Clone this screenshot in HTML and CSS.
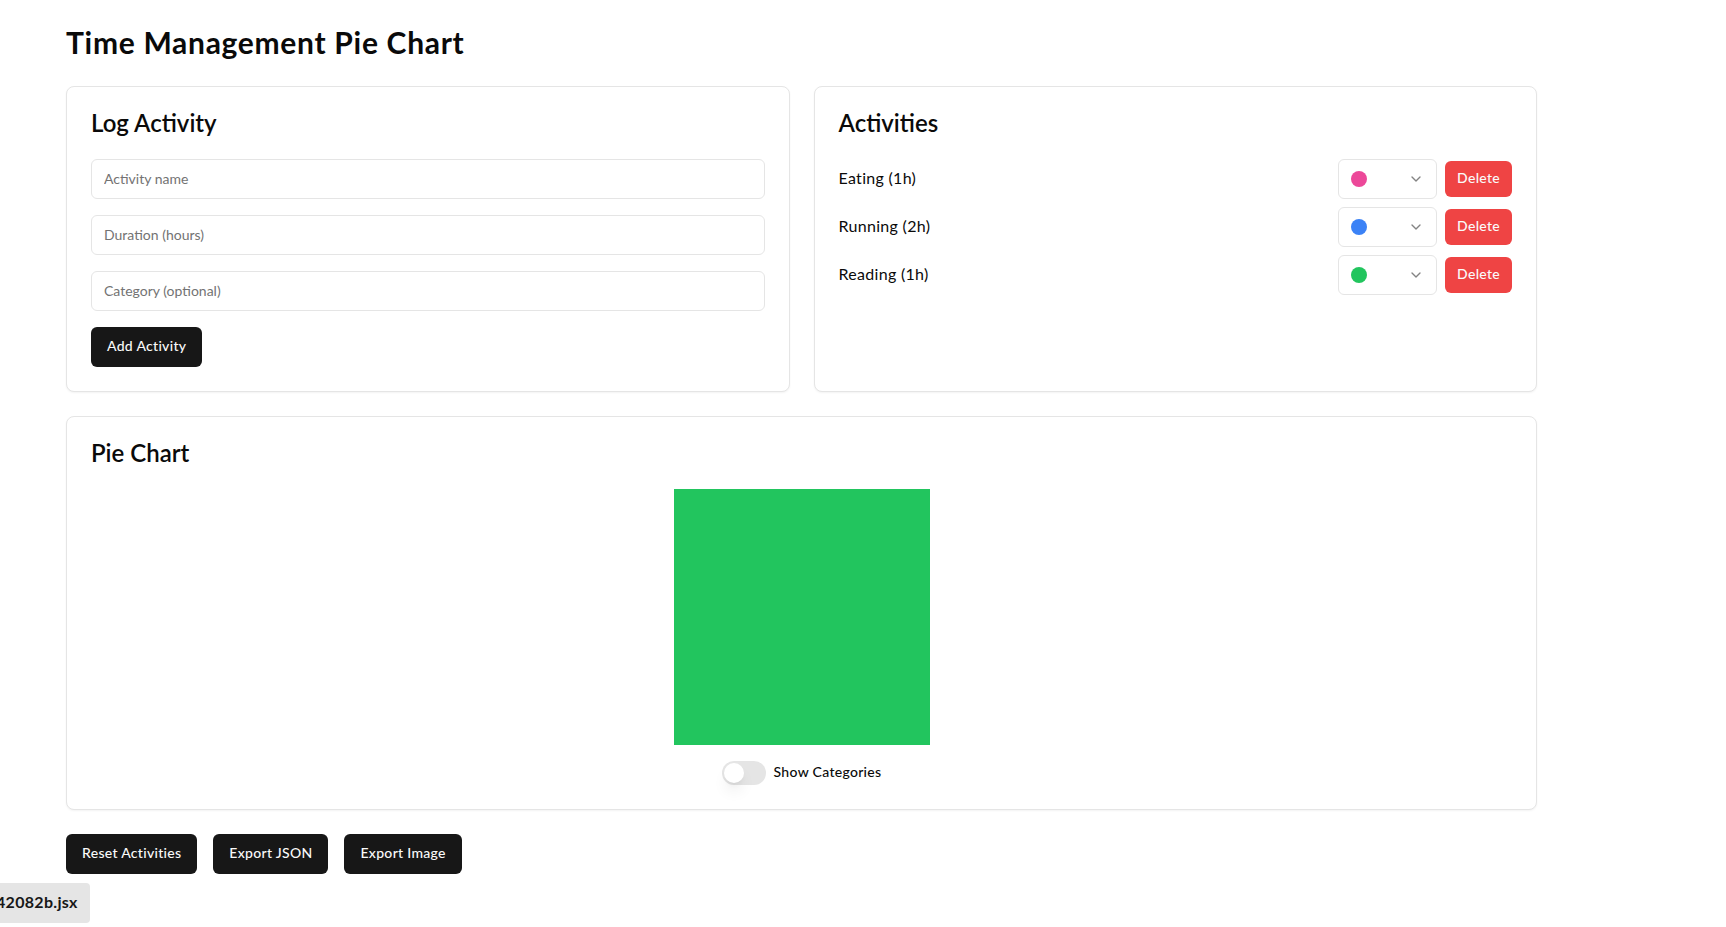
FILE: index.html
```html
<!DOCTYPE html>
<html lang="en">
<head>
<meta charset="utf-8">
<title>Time Management Pie Chart</title>
<link rel="stylesheet" href="styles.css">
</head>
<body>
<div class="page">
  <h1 class="title">Time Management Pie Chart</h1>
  <div class="top-grid">
    <section class="card">
      <h2 class="card-title">Log Activity</h2>
      <div class="form">
        <input class="input" type="text" placeholder="Activity name">
        <input class="input" type="text" placeholder="Duration (hours)">
        <input class="input" type="text" placeholder="Category (optional)">
        <div><button class="btn btn-dark">Add Activity</button></div>
      </div>
    </section>
    <section class="card">
      <h2 class="card-title">Activities</h2>
      <ul class="list">
        <li class="row">
          <span class="row-label">Eating (1h)</span>
          <div class="row-actions">
            <div class="select"><span class="dot dot-pink"></span><svg class="chev" viewBox="0 0 24 24" width="16" height="16"><path d="m6 9 6 6 6-6" fill="none" stroke="currentColor" stroke-width="2" stroke-linecap="round" stroke-linejoin="round"/></svg></div>
            <button class="btn btn-red">Delete</button>
          </div>
        </li>
        <li class="row">
          <span class="row-label">Running (2h)</span>
          <div class="row-actions">
            <div class="select"><span class="dot dot-blue"></span><svg class="chev" viewBox="0 0 24 24" width="16" height="16"><path d="m6 9 6 6 6-6" fill="none" stroke="currentColor" stroke-width="2" stroke-linecap="round" stroke-linejoin="round"/></svg></div>
            <button class="btn btn-red">Delete</button>
          </div>
        </li>
        <li class="row">
          <span class="row-label">Reading (1h)</span>
          <div class="row-actions">
            <div class="select"><span class="dot dot-green"></span><svg class="chev" viewBox="0 0 24 24" width="16" height="16"><path d="m6 9 6 6 6-6" fill="none" stroke="currentColor" stroke-width="2" stroke-linecap="round" stroke-linejoin="round"/></svg></div>
            <button class="btn btn-red">Delete</button>
          </div>
        </li>
      </ul>
    </section>
  </div>
  <section class="card chart-card">
    <h2 class="card-title">Pie Chart</h2>
    <div class="chart-body">
      <div class="chart"></div>
      <label class="toggle-row">
        <span class="switch"><span class="thumb"></span></span>
        <span class="toggle-label">Show Categories</span>
      </label>
    </div>
  </section>
  <div class="actions">
    <button class="btn btn-dark">Reset Activities</button>
    <button class="btn btn-dark">Export JSON</button>
    <button class="btn btn-dark">Export Image</button>
  </div>
</div>
<div class="file-tag"><span class="file-name">42082b.jsx</span></div>
</body>
</html>
```
FILE: styles.css
```css
* { box-sizing: border-box; }
html, body { margin: 0; padding: 0; background: #ffffff; }
body {
  font-family: "Lato", "Noto Sans", "Liberation Sans", sans-serif;
  color: #0a0a0a;
}
.page {
  width: 1537px;
  padding: 26px 0 0 66px;
}
.title {
  margin: 0 0 28px;
  font-size: 30px;
  line-height: 32px;
  font-weight: 700;
  letter-spacing: 0.7px;
}
.top-grid {
  display: grid;
  grid-template-columns: 1fr 1fr;
  gap: 24px;
  margin-bottom: 24px;
}
.card {
  border: 1px solid #e5e5e5;
  border-radius: 8px;
  background: #fff;
  box-shadow: 0 1px 2px rgba(0,0,0,0.05);
  padding: 24px;
}
.card-title {
  margin: 0 0 24px;
  font-size: 24px;
  line-height: 24px;
  font-weight: 600;
}
.form { display: flex; flex-direction: column; gap: 16px; }
.input {
  height: 40px;
  border: 1px solid #e5e5e5;
  border-radius: 6px;
  padding: 6px 12px 8px;
  font-family: inherit;
  font-size: 14px;
  color: #0a0a0a;
  background: #fff;
  outline: none;
}
.input::placeholder { color: #737373; }
.btn {
  font-family: inherit;
  font-size: 14px;
  font-weight: 500;
  border: none;
  border-radius: 6px;
  cursor: pointer;
  letter-spacing: 0.3px;
}
.btn-dark {
  height: 40px;
  padding: 0 16px 3px;
  background: #171717;
  color: #fafafa;
}
.btn-red {
  height: 36px;
  padding: 0 12px 3px;
  background: #ef4444;
  color: #fafafa;
}
.list { list-style: none; margin: 0; padding: 0; display: flex; flex-direction: column; gap: 8px; }
.row { display: flex; align-items: center; justify-content: space-between; }
.row-label { font-size: 16px; line-height: 24px; padding-bottom: 3px; letter-spacing: 0.3px; }
.row-actions { display: flex; align-items: center; gap: 8px; }
.select {
  width: 99px;
  height: 40px;
  border: 1px solid #e5e5e5;
  border-radius: 6px;
  display: flex;
  align-items: center;
  justify-content: space-between;
  padding: 0 12px;
  background: #fff;
}
.dot { width: 16px; height: 16px; border-radius: 50%; display: block; }
.dot-pink { background: #ec4899; }
.dot-blue { background: #3b82f6; }
.dot-green { background: #22c55e; }
.chev { color: #0a0a0a; opacity: 0.5; display: block; }
.chart-body { display: flex; flex-direction: column; align-items: center; gap: 16px; }
.chart { width: 256px; height: 256px; background: #22c55e; }
.toggle-row { display: flex; align-items: center; gap: 8px; }
.switch {
  width: 44px;
  height: 24px;
  border-radius: 12px;
  background: #e5e5e5;
  padding: 2px;
  display: flex;
}
.thumb {
  width: 20px;
  height: 20px;
  border-radius: 50%;
  background: #fff;
  box-shadow: 0 10px 15px -3px rgba(0,0,0,0.1), 0 4px 6px -4px rgba(0,0,0,0.1);
}
.toggle-label { font-size: 14px; font-weight: 500; line-height: 14px; padding-bottom: 2px; letter-spacing: 0.3px; }
.actions { display: flex; gap: 16px; margin-top: 24px; }
.file-tag {
  position: fixed;
  left: 0;
  bottom: 4px;
  width: 90px;
  height: 40px;
  padding-bottom: 4px;
  background: #e5e5e5;
  border-radius: 0 4px 4px 0;
  overflow: hidden;
  display: flex;
  align-items: center;
}
.file-name {
  margin-left: -4px;
  font-size: 16px;
  font-weight: 700;
  color: #171717;
  white-space: nowrap;
  letter-spacing: 0.3px;
}
```
